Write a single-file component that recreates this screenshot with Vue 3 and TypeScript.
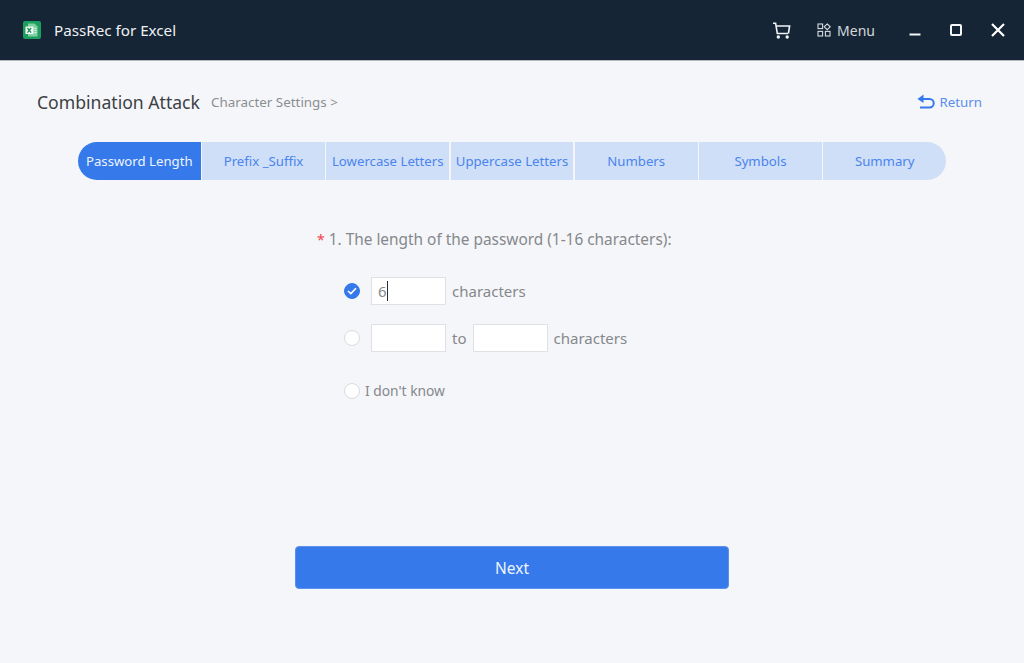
<script setup lang="ts">
const tabs: string[] = ['Password Length', 'Prefix _Suffix', 'Lowercase Letters', 'Uppercase Letters', 'Numbers', 'Symbols', 'Summary']
</script>

<template>
  <div class="app">
    <header class="topbar">
      <div class="brand">
        <svg class="logo" width="18" height="18" viewBox="0 0 18 18">
          <rect width="18" height="18" rx="2" fill="#1e9e5e" />
          <path d="M5 2.5h6.5l3 3v10H5z" fill="#7fd0a4" />
          <rect x="2.5" y="5.5" width="8" height="7.5" fill="#f2fbf6" />
          <path d="M4.5 7l3.6 4.6M8.1 7l-3.6 4.6" stroke="#178a52" stroke-width="1.3" />
          <path d="M11.5 7.5h2M11.5 9.5h2M11.5 11.5h2" stroke="#e4f6ec" stroke-width="1" />
        </svg>
        <span class="brand-name">PassRec for Excel</span>
      </div>
      <div class="actions">
        <svg class="cart" width="19" height="17" viewBox="0 0 19 17" fill="none" stroke="#f2f4f6" stroke-width="1.6">
          <path d="M1 1.2h2.6l1.7 10.3h10.6M4 4h13.6l-1.2 7.5" />
          <circle cx="6.3" cy="15" r="0.9" fill="#f2f4f6" />
          <circle cx="15.2" cy="15" r="0.9" fill="#f2f4f6" />
        </svg>
        <div class="menu">
          <svg width="14" height="14" viewBox="0 0 14 14" fill="none" stroke="#d8dce0" stroke-width="1.1">
            <rect x="1" y="1" width="4.6" height="4.6" />
            <path d="M10.6 0.9l3 2.9-3 2.9-3-2.9z" transform="translate(-0.4 0)" />
            <rect x="1" y="8.4" width="4.6" height="4.6" />
            <rect x="8.4" y="8.4" width="4.6" height="4.6" />
          </svg>
          <span>Menu</span>
        </div>
        <div class="win">
          <svg width="12" height="12" viewBox="0 0 12 12"><path d="M0.5 10.5h11" stroke="#f5f6f7" stroke-width="2" /></svg>
          <svg width="12" height="12" viewBox="0 0 12 12" fill="none"><rect x="1" y="1" width="10" height="10" rx="1" stroke="#f5f6f7" stroke-width="2" /></svg>
          <svg width="14" height="14" viewBox="0 0 14 14"><path d="M1 1l12 12M13 1L1 13" stroke="#fff" stroke-width="2.2" /></svg>
        </div>
      </div>
    </header>

    <main class="content">
      <div class="title-row">
        <div class="titles">
          <span class="title">Combination Attack</span>
          <span class="subtitle">Character Settings &gt;</span>
        </div>
        <div class="return">
          <svg width="18" height="15" viewBox="0 0 18 15" fill="none" stroke="#3579ea" stroke-width="2">
            <path d="M3 5h9.5a4 4 0 0 1 0 8.5H3" />
            <path d="M6.5 0.5v8.5L0.5 5z" fill="#3579ea" stroke="none" />
          </svg>
          <span>Return</span>
        </div>
      </div>

      <nav class="tabs">
        <div v-for="(tab, i) in tabs" :key="tab" class="tab" :class="{ active: i === 0 }">{{ tab }}</div>
      </nav>

      <section class="form">
        <div class="question"><span class="star">*</span> 1. The length of the password (1-16 characters):</div>
        <div class="option first">
          <span class="radio checked">
            <svg width="10" height="8" viewBox="0 0 10 8" fill="none"><path d="M1 4l2.8 2.6L9 1.2" stroke="#fff" stroke-width="1.6" /></svg>
          </span>
          <span class="field"><span class="val">6</span><i class="caret"></i></span>
          <span class="lbl">characters</span>
        </div>
        <div class="option second">
          <span class="radio"></span>
          <span class="field"></span>
          <span class="lbl to">to</span>
          <span class="field"></span>
          <span class="lbl">characters</span>
        </div>
        <div class="option third">
          <span class="radio"></span>
          <span class="small">I don't know</span>
        </div>
      </section>

      <button class="next" type="button">Next</button>
    </main>
  </div>
</template>

<style>
html, body { margin: 0; background: #f5f6f9; }
</style>

<style scoped>
.app {
  width: 1024px;
  height: 663px;
  overflow: hidden;
  display: flex;
  flex-direction: column;
  background: #f5f6f9;
  font-family: "Noto Sans", "Open Sans", sans-serif;
}
.topbar {
  height: 61px;
  box-sizing: border-box;
  border-bottom: 1px solid #b4b9be;
  background: #152535;
  display: flex;
  align-items: center;
  justify-content: space-between;
  padding: 0 19px 0 23px;
  flex: none;
}
.brand { display: flex; align-items: center; gap: 13px; }
.logo { display: block; }
.brand-name { color: #eef0f2; font-size: 15.2px; }
.actions { display: flex; align-items: center; }
.cart { display: block; margin-right: 26px; }
.menu { display: flex; align-items: center; gap: 6px; color: #d3d7db; font-size: 14px; margin-right: 34px; }
.menu svg { display: block; }
.win { display: flex; align-items: center; gap: 29px; }
.win svg { display: block; }
.content {
  flex: 1;
  display: flex;
  flex-direction: column;
  align-items: center;
  padding: 29px 42px 0 37px;
}
.title-row {
  align-self: stretch;
  display: flex;
  align-items: center;
  justify-content: space-between;
  height: 24px;
}
.titles { display: flex; align-items: center; gap: 11px; margin-top: -1px; }
.title { font-size: 17.6px; color: #3c3f44; }
.subtitle { font-size: 13.4px; color: #8b8e92; }
.return { display: flex; align-items: center; gap: 5px; color: #5b8def; font-size: 13.3px; margin-top: -1px; }
.return svg { display: block; }
.tabs {
  width: 868px;
  height: 38px;
  margin-top: 28px;
  margin-left: 5px;
  flex: none;
  display: grid;
  grid-template-columns: repeat(7, 1fr);
  column-gap: 1.67px;
  border-radius: 19px;
  overflow: hidden;
}
.tab {
  background: #cfdff7;
  color: #4a84ee;
  font-size: 13.2px;
  display: flex;
  align-items: center;
  justify-content: center;
  white-space: nowrap;
}
.tab.active { background: #3579ea; color: #eef4fe; }
.form {
  width: 390px;
  margin-top: 49px;
  margin-left: 5px;
  color: #85888c;
}
.question { font-size: 15.4px; line-height: 22px; white-space: nowrap; }
.star { color: #f0434a; font-size: 14px; }
.option { display: flex; align-items: center; margin-left: 27px; }
.first { margin-top: 26px; }
.second { margin-top: 19px; }
.third { margin-top: 29px; }
.radio {
  width: 16px;
  height: 16px;
  box-sizing: border-box;
  border-radius: 50%;
  border: 1px solid #d9dbde;
  background: #fff;
  flex: none;
  margin-right: 11px;
  display: flex;
  align-items: center;
  justify-content: center;
}
.radio.checked { background: #3579ea; border-color: #3579ea; }
.field {
  width: 75px;
  height: 28px;
  box-sizing: border-box;
  border: 1px solid #dfe1e4;
  background: #fff;
  display: flex;
  align-items: center;
  padding-left: 6px;
  font-size: 15px;
  flex: none;
}
.caret { width: 1px; height: 20px; background: #2a2d31; }
.lbl { font-size: 15px; margin-left: 6px; }
.lbl.to { margin-right: 6px; }
.small { font-size: 13.8px; margin-left: -6px; }
.next {
  width: 434px;
  height: 43px;
  flex: none;
  margin-top: 146px;
  margin-left: 5px;
  border: 1px solid #5b92ee;
  border-radius: 4px;
  background: #3579ea;
  color: #eef4fe;
  font-family: inherit;
  font-size: 15.5px;
  font-weight: 400;
  padding: 0;
}
</style>
